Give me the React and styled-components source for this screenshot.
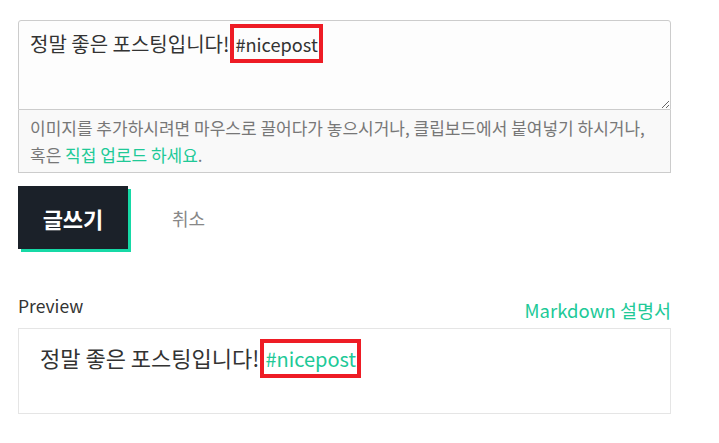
import styled, { createGlobalStyle } from "styled-components";

const GlobalStyle = createGlobalStyle`
  body {
    margin: 0;
    background: #fff;
    font-family: "Noto Sans CJK KR", "Noto Sans", sans-serif;
  }
`;

export default function App() {
  return (
    <>
      <GlobalStyle />
      <Page>
        <Editor>
          <Input>
            정말 좋은 포스팅입니다!<Mark>#nicepost</Mark>
          </Input>
          <Hint>
            이미지를 추가하시려면 마우스로 끌어다가 놓으시거나, 클립보드에서 붙여넣기 하시거나,
            <br />
            혹은 <HintLink>직접 업로드 하세요</HintLink>.
          </Hint>
        </Editor>
        <Actions>
          <SubmitButton>글쓰기</SubmitButton>
          <CancelButton>취소</CancelButton>
        </Actions>
        <PreviewHeader>
          <PreviewLabel>Preview</PreviewLabel>
          <HelpLink>Markdown 설명서</HelpLink>
        </PreviewHeader>
        <PreviewBox>
          정말 좋은 포스팅입니다!<Mark tag>#nicepost</Mark>
        </PreviewBox>
      </Page>
    </>
  );
}

const Page = styled.div`
  width: 653px;
  padding: 20px 18px;
`;

const Editor = styled.div`
  display: flex;
  flex-direction: column;
`;

const Input = styled.div`
  height: 90px;
  box-sizing: border-box;
  padding: 9px 11px;
  border: 1px solid #ccc;
  border-radius: 3px 3px 0 0;
  background: #fdfdfd;
  color: #333;
  font-size: 20px;
  line-height: 28px;
  resize: vertical;
  overflow: auto;
`;

const Mark = styled.span`
  display: inline-block;
  border: 4px solid #ee1c25;
  padding: 2px 1px 1px;
  margin: -8px 0 -8px 1px;
  font-size: 0.91em;
  line-height: 28px;
  color: ${(p) => (p.tag ? "#20c997" : "#333")};
`;

const Hint = styled.div`
  box-sizing: border-box;
  height: 63px;
  padding: 4px 11px;
  border: 1px solid #ccc;
  border-top: none;
  background: #f9f9f9;
  color: #777;
  font-size: 17px;
  line-height: 27px;
  white-space: nowrap;
`;

const HintLink = styled.a`
  color: #20c997;
  cursor: pointer;
`;

const Actions = styled.div`
  display: flex;
  align-items: center;
  margin-top: 13px;
`;

const SubmitButton = styled.button`
  width: 110px;
  height: 63px;
  border: none;
  background: #1b2129;
  color: #fff;
  font-family: inherit;
  font-size: 22px;
  font-weight: 700;
  box-shadow: 3px 3px 0 #16d9a6;
  cursor: pointer;
`;

const CancelButton = styled.button`
  margin-left: 44px;
  border: none;
  background: none;
  padding: 0;
  color: #888;
  font-family: inherit;
  font-size: 18px;
  cursor: pointer;
`;

const PreviewHeader = styled.div`
  display: flex;
  justify-content: space-between;
  align-items: flex-end;
  margin-top: 44px;
`;

const PreviewLabel = styled.div`
  color: #333;
  font-size: 17.5px;
  line-height: 26px;
`;

const HelpLink = styled.a`
  color: #20c997;
  font-size: 18.5px;
  line-height: 26px;
  position: relative;
  top: 4px;
`;

const PreviewBox = styled.div`
  margin-top: 9px;
  height: 86px;
  box-sizing: border-box;
  padding: 13px 21px;
  border: 1px solid #e5e5e5;
  color: #333;
  font-size: 22px;
  line-height: 30px;
`;
